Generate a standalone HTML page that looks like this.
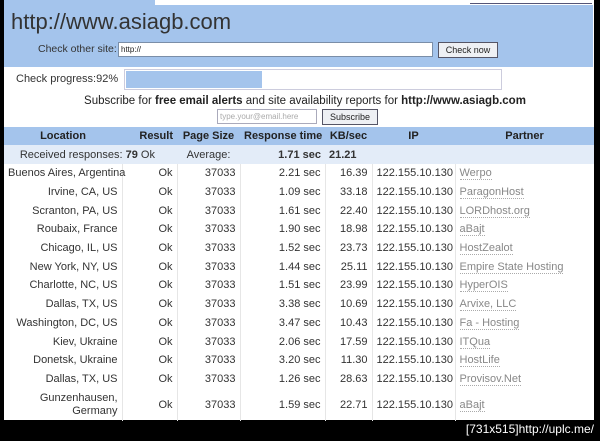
<!DOCTYPE html>
<html><head><meta charset="utf-8"><style>
*{margin:0;padding:0;box-sizing:border-box}
body{width:600px;height:441px;background:#000;position:relative;overflow:hidden;font-family:"Liberation Sans",sans-serif;font-size:11px;color:#222}
.a{position:absolute}
#page{left:4px;top:0;width:590px;height:420px;background:#fff}
table{border-collapse:collapse;position:absolute;left:4px;top:127px;width:590px;table-layout:fixed}
td,th{height:18.7px;padding:0 4px;white-space:nowrap;font-size:11px}
th{background:#a4c4ec;font-weight:bold;color:#222;height:18px}
td{text-align:right;border-left:1px solid #e6e6e6;color:#333}
td:first-child{border-left:none}
td.p{text-align:left;color:#888}
td.p span{border-bottom:1px dotted #aaa}
tr.avg td{background:#e3ecf8;border:none;height:19px}
</style></head><body>
<div id="page" class="a"></div>
<div class="a" style="left:4px;top:0;width:151px;height:6px;background:#a4c4ec"></div>
<div class="a" style="left:470px;top:0;width:122px;height:4px;border-bottom:1px solid #557;background:#fff"></div>
<div class="a" style="left:4px;top:5px;width:589px;height:62px;background:#a4c4ec"></div>
<div class="a" style="left:11px;top:9px;font-size:22px;color:#333">http://www.asiagb.com</div>
<div class="a" style="left:38px;top:43px;font-size:10.5px;color:#333">Check other site:</div>
<div class="a" style="left:118px;top:42px;width:315px;height:15px;background:#fff;border:1px solid #7a8ea8;font-size:8px;padding:2px 2px">http://</div>
<div class="a" style="left:438px;top:42px;width:60px;height:16px;background:#eef0f4;border:1px solid #556;font-size:9px;text-align:center;line-height:14px">Check now</div>
<div class="a" style="left:16px;top:73px;color:#333">Check progress:92%</div>
<div class="a" style="left:124px;top:69px;width:378px;height:21px;border:1px solid #ccd;background:#fff"></div>
<div class="a" style="left:126px;top:71px;width:136px;height:17px;background:#a4c4ec"></div>
<div class="a" style="left:0;top:95px;width:600px;text-align:center;font-size:11.5px;padding-left:10px">Subscribe for <b>free email alerts</b> and site availability reports for <b>http://www.asiagb.com</b></div>
<div class="a" style="left:217px;top:109px;width:100px;height:15px;border:1px solid #aab;background:#fff;font-size:8px;color:#aaa;padding:2px">type.your@email.here</div>
<div class="a" style="left:322px;top:109px;width:56px;height:16px;background:#eef0f4;border:1px solid #556;font-size:9px;text-align:center;line-height:14px">Subscribe</div>
<table>
<colgroup><col style="width:118px"><col style="width:55px"><col style="width:63px"><col style="width:85px"><col style="width:47px"><col style="width:83px"><col></colgroup>
<tr><th style="text-align:center">Location</th><th style="text-align:right">Result</th><th>Page Size</th><th>Response time</th><th>KB/sec</th><th>IP</th><th>Partner</th></tr>
<tr class="avg"><td colspan="2" style="text-align:right;padding-right:22px">Received responses: <b>79</b> Ok</td><td style="text-align:center">Average:</td><td style="text-align:right"><b>1.71 sec</b></td><td style="text-align:left;padding-left:4px"><b>21.21</b></td><td></td><td></td></tr>
<tr><td>Buenos Aires, Argentina</td><td>Ok</td><td>37033</td><td>2.21 sec</td><td>16.39</td><td>122.155.10.130</td><td class="p"><span>Werpo</span></td></tr>
<tr><td>Irvine, CA, US</td><td>Ok</td><td>37033</td><td>1.09 sec</td><td>33.18</td><td>122.155.10.130</td><td class="p"><span>ParagonHost</span></td></tr>
<tr><td>Scranton, PA, US</td><td>Ok</td><td>37033</td><td>1.61 sec</td><td>22.40</td><td>122.155.10.130</td><td class="p"><span>LORDhost.org</span></td></tr>
<tr><td>Roubaix, France</td><td>Ok</td><td>37033</td><td>1.90 sec</td><td>18.98</td><td>122.155.10.130</td><td class="p"><span>aBajt</span></td></tr>
<tr><td>Chicago, IL, US</td><td>Ok</td><td>37033</td><td>1.52 sec</td><td>23.73</td><td>122.155.10.130</td><td class="p"><span>HostZealot</span></td></tr>
<tr><td>New York, NY, US</td><td>Ok</td><td>37033</td><td>1.44 sec</td><td>25.11</td><td>122.155.10.130</td><td class="p"><span>Empire State Hosting</span></td></tr>
<tr><td>Charlotte, NC, US</td><td>Ok</td><td>37033</td><td>1.51 sec</td><td>23.99</td><td>122.155.10.130</td><td class="p"><span>HyperOIS</span></td></tr>
<tr><td>Dallas, TX, US</td><td>Ok</td><td>37033</td><td>3.38 sec</td><td>10.69</td><td>122.155.10.130</td><td class="p"><span>Arvixe, LLC</span></td></tr>
<tr><td>Washington, DC, US</td><td>Ok</td><td>37033</td><td>3.47 sec</td><td>10.43</td><td>122.155.10.130</td><td class="p"><span>Fa - Hosting</span></td></tr>
<tr><td>Kiev, Ukraine</td><td>Ok</td><td>37033</td><td>2.06 sec</td><td>17.59</td><td>122.155.10.130</td><td class="p"><span>ITQua</span></td></tr>
<tr><td>Donetsk, Ukraine</td><td>Ok</td><td>37033</td><td>3.20 sec</td><td>11.30</td><td>122.155.10.130</td><td class="p"><span>HostLife</span></td></tr>
<tr><td>Dallas, TX, US</td><td>Ok</td><td>37033</td><td>1.26 sec</td><td>28.63</td><td>122.155.10.130</td><td class="p"><span>Provisov.Net</span></td></tr>
<tr><td style="height:33px;white-space:normal;line-height:13px">Gunzenhausen, Germany</td><td>Ok</td><td>37033</td><td>1.59 sec</td><td>22.71</td><td>122.155.10.130</td><td class="p"><span>aBajt</span></td></tr>
</table>
<div class="a" style="right:6px;top:422px;color:#fff;font-family:'Liberation Sans',sans-serif;font-size:12px">[731x515]http://uplc.me/</div>
</body></html>
